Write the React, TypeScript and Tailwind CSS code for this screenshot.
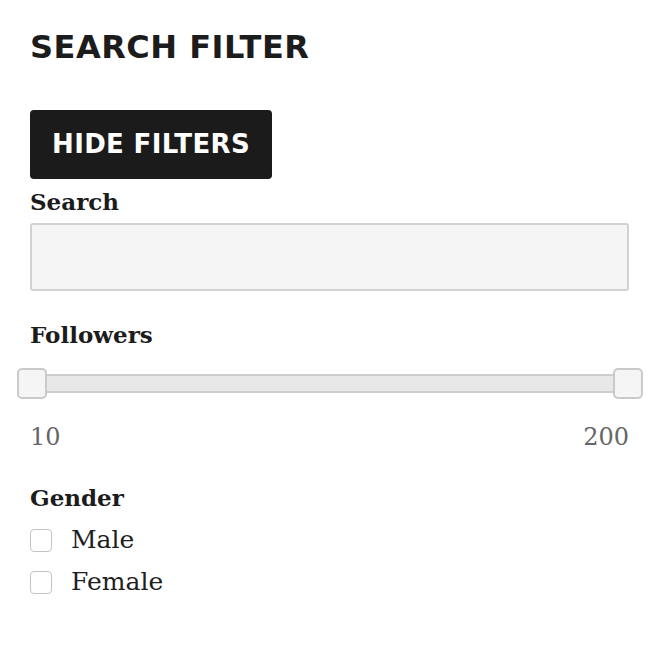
import React from "react";

const serif = { fontFamily: '"DejaVu Serif", serif' };

function Checkbox({ label }: { label: string }) {
  return (
    <label className="flex h-[30px] items-center">
      <span className="box-border block h-[23px] w-[22px] rounded-[4px] border-[1.5px] border-[#c4c4c4] bg-white" />
      <span className="ml-[19px] text-[25px] leading-[30px] text-[#1f1f1f]">{label}</span>
    </label>
  );
}

export default function App() {
  return (
    <div className="min-h-[650px] w-[668px] bg-white pl-[30px] pr-[39px] pt-[27px]" style={serif}>
      <h1
        className="h-[40px] text-[32px] font-bold leading-[40px] tracking-[0.5px] text-[#1c1c1c]"
        style={{ fontFamily: '"DejaVu Sans", sans-serif' }}
      >
        SEARCH FILTER
      </h1>
      <button
        className="mt-[43px] flex h-[69px] w-[242px] items-center justify-center rounded-[4px] bg-[#1b1b1b] text-[26px] font-bold tracking-[0.35px] text-white"
        style={{ fontFamily: '"DejaVu Sans", sans-serif' }}
      >
        HIDE FILTERS
      </button>
      <div className="mt-[9px] h-[28px] text-[23px] font-bold leading-[28px] text-[#1c1c1c]">Search</div>
      <input
        type="text"
        className="mt-[7px] box-border block h-[68px] w-full rounded-[3px] border-2 border-[#d2d2d2] bg-[#f5f5f5] outline-none"
      />
      <div className="mt-[30px] h-[28px] text-[23px] font-bold leading-[28px] text-[#1c1c1c]">Followers</div>
      <div className="relative -ml-[13px] -mr-[14px] mt-[19px] h-[31px]">
        <div className="absolute left-0 right-0 top-[6px] box-border h-[19px] border-2 border-[#cdcdcd] bg-[#e8e8e8]" />
        <div className="absolute left-0 top-0 box-border h-[31px] w-[30px] rounded-[5px] border-2 border-[#cacaca] bg-[#f5f5f5]" />
        <div className="absolute right-0 top-0 box-border h-[31px] w-[30px] rounded-[5px] border-2 border-[#cacaca] bg-[#f5f5f5]" />
      </div>
      <div className="mt-[23px] flex h-[30px] justify-between text-[24px] leading-[30px] text-[#666666]">
        <span>10</span>
        <span>200</span>
      </div>
      <div className="mt-[32px] h-[28px] text-[23px] font-bold leading-[28px] text-[#1c1c1c]">Gender</div>
      <div className="mt-[13px] flex flex-col gap-[12px]">
        <Checkbox label="Male" />
        <Checkbox label="Female" />
      </div>
    </div>
  );
}
